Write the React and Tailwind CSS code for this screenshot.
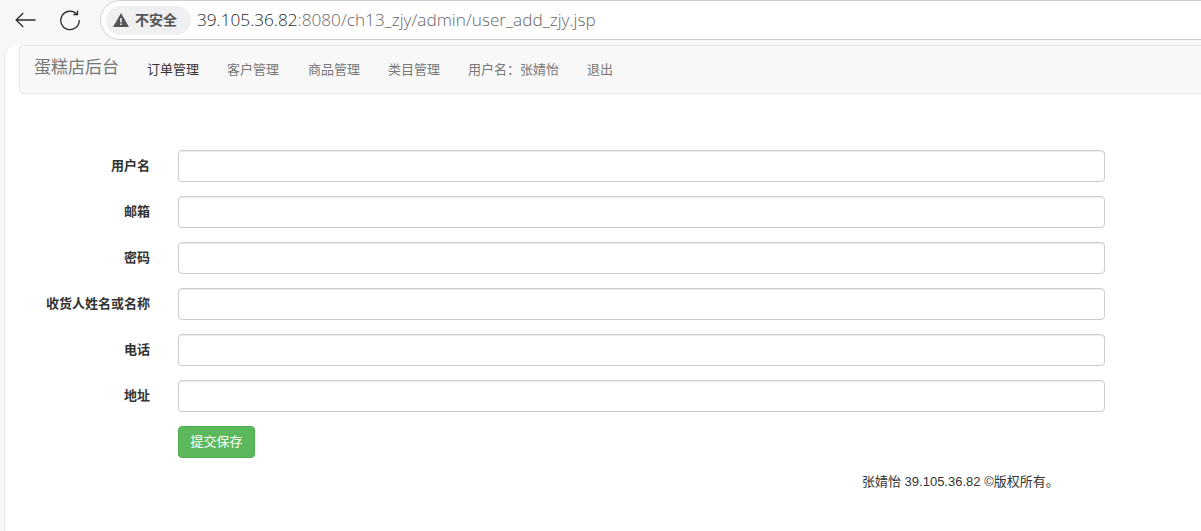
import React from 'react';

const font = "font-['Liberation_Sans','Noto_Sans_CJK_SC',sans-serif]";

const navLinks = ['客户管理', '商品管理', '类目管理', '用户名：张婧怡', '退出'];
const fields = ['用户名', '邮箱', '密码', '收货人姓名或名称', '电话', '地址'];

function BrowserBar() {
    return (
        <div className="h-[45px] pb-[5px] flex items-center overflow-hidden">
            <div className="w-[100px] shrink-0 flex items-center">
                <svg className="ml-[15px]" width="21" height="16" viewBox="0 0 21 16" fill="none" stroke="#2b2b2b" strokeWidth="1.3">
                    <path d="M20.5 8H1.2M8.2 1 1.2 8l7 7" />
                </svg>
                <svg className="ml-[23px]" width="22" height="22" viewBox="0 0 22 22" fill="none" stroke="#2b2b2b" strokeWidth="1.3">
                    <path d="M17.8 5.2A9.2 9.2 0 1 0 20.2 11" />
                    <path d="M18.5 1.5v4.2h-4.2" />
                </svg>
            </div>
            <div className="h-[40px] flex-1 mr-[-30px] bg-white border border-[#d0d0d0] rounded-l-[20px] flex items-center pl-[5px]">
                <div className="h-[29px] w-[85px] rounded-[15px] bg-[#eff0f2] flex items-center pl-[7px] gap-[6px]">
                    <svg width="16" height="14" viewBox="0 0 16 14">
                        <path d="M8 0 16 14H0Z" fill="#555" />
                        <path d="M7.2 5h1.6v4.5H7.2zM7.2 10.5h1.6v1.6H7.2z" fill="#eff0f2" />
                    </svg>
                    <span className="text-[14px] font-bold text-[#555] whitespace-nowrap">不安全</span>
                </div>
                <div className="ml-[6px] text-[17.2px] font-['Open_Sans',sans-serif] font-light text-[#666] whitespace-nowrap">
                    <span className="text-[#1f1f1f]">39.105.36.82</span>:8080/ch13_zjy/admin/user_add_zjy.jsp
                </div>
            </div>
        </div>
    );
}

function Navbar() {
    return (
        <div className="h-[49px] ml-[14px] bg-[#f8f8f8] border border-r-0 border-[#e7e7e7] rounded-l-[4px] flex items-center pl-[14px] text-[13px] text-[#777]">
            <span className="text-[17px] w-[113px] shrink-0 mb-[3px]">蛋糕店后台</span>
            <span className="text-[#333] mr-[28px]">订单管理</span>
            <div className="flex gap-[28px]">
                {navLinks.map((link, index) => (
                    <span className={index === 0 ? "mr-[1px]" : ""} key={link}>{link}</span>
                ))}
            </div>
        </div>
    );
}

function Form() {
    return (
        <form className="pt-[56px] flex flex-col gap-[14px]">
            {fields.map(label => (
                <div className="flex items-center" key={label}>
                    <label className="w-[145px] text-right text-[13px] font-bold text-[#333] whitespace-nowrap">{label}</label>
                    <input className="ml-[28px] w-[927px] h-[32px] bg-white border border-[#ccc] rounded-[4px] shadow-[inset_0_1px_1px_rgba(0,0,0,0.075)]" />
                </div>
            ))}
            <button type="button" className="ml-[173px] w-[77px] h-[32px] bg-[#5cb85c] border border-[#4cae4c] rounded-[4px] text-white text-[13px]">提交保存</button>
        </form>
    );
}

export default function App() {
    return (
        <div className={`${font} h-[531px] bg-[#f7f7f7] overflow-hidden`}>
            <BrowserBar />
            <div className="h-[486px] ml-[4px] bg-white border-l border-[#e8e8e8] rounded-tl-[12px] overflow-hidden">
                <Navbar />
                <Form />
                <p className="mt-[14px] ml-[857px] text-[13px] text-[#333] whitespace-nowrap">张婧怡 39.105.36.82 ©版权所有。</p>
            </div>
        </div>
    );
}
